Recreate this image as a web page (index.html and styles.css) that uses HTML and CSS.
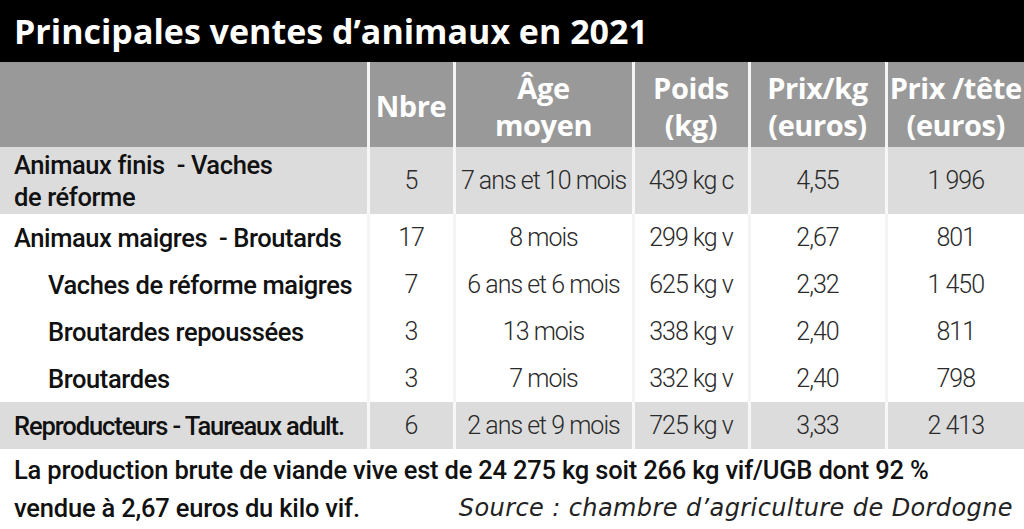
FILE: index.html
```html
<!DOCTYPE html>
<html lang="fr">
<head>
<meta charset="utf-8">
<title>Principales ventes d’animaux en 2021</title>
<link rel="stylesheet" href="styles.css">
</head>
<body>
<div class="card">
  <h1 class="title">Principales ventes d’animaux en 2021</h1>
  <table class="sales">
    <colgroup>
      <col class="c-label"><col class="c-nb"><col class="c-age"><col class="c-poids"><col class="c-pkg"><col class="c-ptete">
    </colgroup>
    <thead>
      <tr class="head">
        <th class="lab"></th>
        <th>Nbre</th>
        <th>Âge<br>moyen</th>
        <th>Poids<br>(kg)</th>
        <th>Prix/kg<br>(euros)</th>
        <th>Prix /tête<br>(euros)</th>
      </tr>
    </thead>
    <tbody>
      <tr class="shade tall">
        <td class="lab">Animaux finis&nbsp; - Vaches<br>de réforme</td>
        <td>5</td><td>7 ans et 10 mois</td><td>439 kg c</td><td>4,55</td><td>1 996</td>
      </tr>
      <tr>
        <td class="lab">Animaux maigres&nbsp; - Broutards</td>
        <td>17</td><td>8 mois</td><td>299 kg v</td><td>2,67</td><td>801</td>
      </tr>
      <tr>
        <td class="lab sub">Vaches de réforme maigres</td>
        <td>7</td><td>6 ans et 6 mois</td><td>625 kg v</td><td>2,32</td><td>1 450</td>
      </tr>
      <tr>
        <td class="lab sub">Broutardes repoussées</td>
        <td>3</td><td>13 mois</td><td>338 kg v</td><td>2,40</td><td>811</td>
      </tr>
      <tr>
        <td class="lab sub">Broutardes</td>
        <td>3</td><td>7 mois</td><td>332 kg v</td><td>2,40</td><td>798</td>
      </tr>
      <tr class="shade">
        <td class="lab tight">Reproducteurs - Taureaux adult.</td>
        <td>6</td><td>2 ans et 9 mois</td><td>725 kg v</td><td>3,33</td><td>2 413</td>
      </tr>
    </tbody>
  </table>
  <div class="foot">
    <p class="note">La production brute de viande vive est de 24 275 kg soit 266 kg vif/UGB dont 92 %</p>
    <p class="note last"><span>vendue à 2,67 euros du kilo vif.</span><span class="source">Source : chambre d’agriculture de Dordogne</span></p>
  </div>
</div>
</body>
</html>
```

FILE: styles.css
```css
html, body {
  margin: 0;
  padding: 0;
  background: #ffffff;
}

.card {
  width: 1024px;
  height: 529px;
  overflow: hidden;
  font-family: Roboto, "Liberation Sans", sans-serif;
  color: #1a1a1a;
}

.title {
  margin: 0;
  height: 62px;
  box-sizing: border-box;
  background: #000000;
  color: #ffffff;
  font-family: "Open Sans", Roboto, sans-serif;
  font-weight: 700;
  font-size: 34px;
  letter-spacing: 0;
  line-height: 62px;
  padding: 0 0 0 14px;
}

.sales {
  width: 1024px;
  table-layout: fixed;
  border-collapse: collapse;
  border-spacing: 0;
}

.c-label { width: 368px; }
.c-nb { width: 86px; }
.c-age { width: 179px; }
.c-poids { width: 116px; }
.c-pkg { width: 137px; }
.c-ptete { width: 138px; }

.sales th,
.sales td {
  padding: 0;
  border-left: 3px solid #f4f4f4;
  text-align: center;
  vertical-align: middle;
  white-space: nowrap;
}

.sales th.lab,
.sales td.lab {
  border-left: none;
  text-align: left;
  padding-left: 14px;
}

.head {
  height: 85px;
  background: #999999;
}

.head th {
  color: #ffffff;
  font-family: "Open Sans", Roboto, sans-serif;
  font-weight: 700;
  font-size: 29px;
  letter-spacing: -0.4px;
  line-height: 37px;
  padding-top: 2px;
}

.sales tbody tr {
  height: 47px;
}

.sales tbody tr.tall {
  height: 67px;
}

.sales tbody tr.shade {
  background: #dcdcdc;
}

.sales tbody tr.shade td {
  border-left-color: #f7f7f7;
}

.sales td {
  font-size: 25px;
  font-weight: 300;
  letter-spacing: -1px;
  color: #2a2a2a;
  line-height: 30px;
}

.sales td.lab {
  font-weight: 500;
  font-size: 25.5px;
  letter-spacing: -0.4px;
  color: #111111;
  line-height: 32px;
}

.sales td.lab.sub {
  padding-left: 48px;
}

.sales td.lab.tight {
  letter-spacing: -1.1px;
}

.foot {
  padding: 2px 11px 0 14px;
}

.note {
  margin: 0;
  font-size: 25.5px;
  font-weight: 500;
  letter-spacing: -0.2px;
  color: #111111;
  line-height: 38px;
}

.note.last {
  display: flex;
  justify-content: space-between;
}

.source {
  font-style: italic;
  font-weight: 400;
  font-family: "DejaVu Sans", "Open Sans", sans-serif;
  font-size: 24px;
  letter-spacing: 0.4px;
  color: #222222;
}
```
